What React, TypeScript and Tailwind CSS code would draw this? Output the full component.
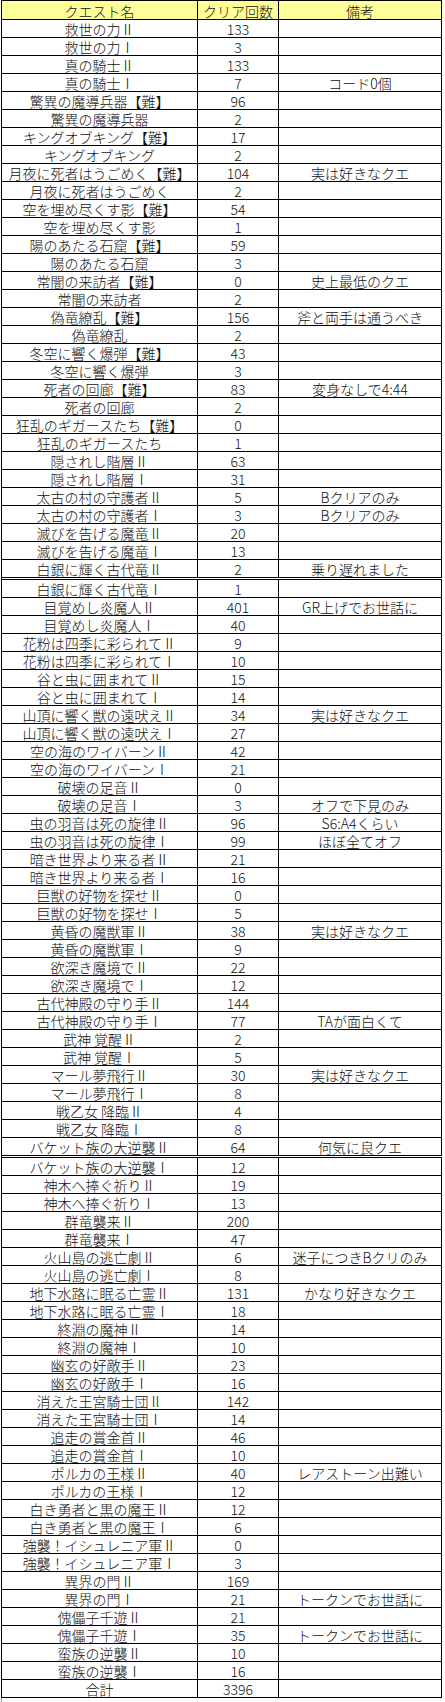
import React from "react";

type Row = [string, number, string?, boolean?];

const rows: Row[] = [
  ["救世の力Ⅱ", 133],
  ["救世の力Ⅰ", 3],
  ["真の騎士Ⅱ", 133],
  ["真の騎士Ⅰ", 7, "コード0個"],
  ["驚異の魔導兵器【難】", 96],
  ["驚異の魔導兵器", 2],
  ["キングオブキング【難】", 17],
  ["キングオブキング", 2],
  ["月夜に死者はうごめく【難】", 104, "実は好きなクエ"],
  ["月夜に死者はうごめく", 2],
  ["空を埋め尽くす影【難】", 54],
  ["空を埋め尽くす影", 1],
  ["陽のあたる石窟【難】", 59],
  ["陽のあたる石窟", 3],
  ["常闇の来訪者【難】", 0, "史上最低のクエ"],
  ["常闇の来訪者", 2],
  ["偽竜繚乱【難】", 156, "斧と両手は通うべき"],
  ["偽竜繚乱", 2],
  ["冬空に響く爆弾【難】", 43],
  ["冬空に響く爆弾", 3],
  ["死者の回廊【難】", 83, "変身なしで4:44"],
  ["死者の回廊", 2],
  ["狂乱のギガースたち【難】", 0],
  ["狂乱のギガースたち", 1],
  ["隠されし階層Ⅱ", 63],
  ["隠されし階層Ⅰ", 31],
  ["太古の村の守護者Ⅱ", 5, "Bクリアのみ"],
  ["太古の村の守護者Ⅰ", 3, "Bクリアのみ"],
  ["滅びを告げる魔竜Ⅱ", 20],
  ["滅びを告げる魔竜Ⅰ", 13],
  ["白銀に輝く古代竜Ⅱ", 2, "乗り遅れました", true],
  ["白銀に輝く古代竜Ⅰ", 1],
  ["目覚めし炎魔人Ⅱ", 401, "GR上げでお世話に"],
  ["目覚めし炎魔人Ⅰ", 40],
  ["花粉は四季に彩られてⅡ", 9],
  ["花粉は四季に彩られてⅠ", 10],
  ["谷と虫に囲まれてⅡ", 15],
  ["谷と虫に囲まれてⅠ", 14],
  ["山頂に響く獣の遠吠えⅡ", 34, "実は好きなクエ"],
  ["山頂に響く獣の遠吠えⅠ", 27],
  ["空の海のワイバーンⅡ", 42],
  ["空の海のワイバーンⅠ", 21],
  ["破壊の足音Ⅱ", 0],
  ["破壊の足音Ⅰ", 3, "オフで下見のみ"],
  ["虫の羽音は死の旋律Ⅱ", 96, "S6:A4くらい"],
  ["虫の羽音は死の旋律Ⅰ", 99, "ほぼ全てオフ"],
  ["暗き世界より来る者Ⅱ", 21],
  ["暗き世界より来る者Ⅰ", 16],
  ["巨獣の好物を探せⅡ", 0],
  ["巨獣の好物を探せⅠ", 5],
  ["黄昏の魔獣軍Ⅱ", 38, "実は好きなクエ"],
  ["黄昏の魔獣軍Ⅰ", 9],
  ["欲深き魔境でⅡ", 22],
  ["欲深き魔境でⅠ", 12],
  ["古代神殿の守り手Ⅱ", 144],
  ["古代神殿の守り手Ⅰ", 77, "TAが面白くて"],
  ["武神 覚醒Ⅱ", 2],
  ["武神 覚醒Ⅰ", 5],
  ["マール夢飛行Ⅱ", 30, "実は好きなクエ"],
  ["マール夢飛行Ⅰ", 8],
  ["戦乙女 降臨Ⅱ", 4],
  ["戦乙女 降臨Ⅰ", 8],
  ["バケット族の大逆襲Ⅱ", 64, "何気に良クエ", true],
  ["バケット族の大逆襲Ⅰ", 12],
  ["神木へ捧ぐ祈りⅡ", 19],
  ["神木へ捧ぐ祈りⅠ", 13],
  ["群竜襲来Ⅱ", 200],
  ["群竜襲来Ⅰ", 47],
  ["火山島の逃亡劇Ⅱ", 6, "迷子につきBクリのみ"],
  ["火山島の逃亡劇Ⅰ", 8],
  ["地下水路に眠る亡霊Ⅱ", 131, "かなり好きなクエ"],
  ["地下水路に眠る亡霊Ⅰ", 18],
  ["終淵の魔神Ⅱ", 14],
  ["終淵の魔神Ⅰ", 10],
  ["幽玄の好敵手Ⅱ", 23],
  ["幽玄の好敵手Ⅰ", 16],
  ["消えた王宮騎士団Ⅱ", 142],
  ["消えた王宮騎士団Ⅰ", 14],
  ["追走の賞金首Ⅱ", 46],
  ["追走の賞金首Ⅰ", 10],
  ["ポルカの王様Ⅱ", 40, "レアストーン出難い"],
  ["ポルカの王様Ⅰ", 12],
  ["白き勇者と黒の魔王Ⅱ", 12],
  ["白き勇者と黒の魔王Ⅰ", 6],
  ["強襲！イシュレニア軍Ⅱ", 0],
  ["強襲！イシュレニア軍Ⅰ", 3],
  ["異界の門Ⅱ", 169],
  ["異界の門Ⅰ", 21, "トークンでお世話に"],
  ["傀儡子千遊Ⅱ", 21],
  ["傀儡子千遊Ⅰ", 35, "トークンでお世話に"],
  ["蛮族の逆襲Ⅱ", 10],
  ["蛮族の逆襲Ⅰ", 16],
];

const cols = "grid grid-cols-[196px_81px_163px]";
const cell = "flex items-end justify-center border-r border-black leading-[15px] whitespace-nowrap";

const App = () => {
  const total = rows.reduce((s, r) => s + r[1], 0);

  return (
    <div className="min-h-screen bg-white text-[#111] text-[14px] font-light [font-family:'Noto_Sans_CJK_JP','Noto_Sans_CJK_SC',sans-serif]">
      <div className="ml-px w-[441px] border-l border-t border-black">
        <div className={`${cols} h-[19px] border-b border-black bg-[#ffff99]`}>
          <div className={cell}>クエスト名</div>
          <div className={cell}>クリア回数</div>
          <div className={cell}>備考</div>
        </div>
        {rows.map(([name, count, note, dbl], i) => (
          <div
            key={i}
            className={
              dbl
                ? "grid h-[20px] grid-cols-[196px_81px_163px] border-b-[3px] border-double border-black"
                : "grid h-[18px] grid-cols-[196px_81px_163px] border-b border-black"
            }
          >
            <div className={cell}>{name}</div>
            <div className={cell}>{count}</div>
            <div className={cell}>{note ?? ""}</div>
          </div>
        ))}
        <div className={`${cols} h-[18px] border-b border-black`}>
          <div className={cell}>合計</div>
          <div className={cell}>{total}</div>
          <div className={cell}></div>
        </div>
      </div>
      <div className="ml-px h-[8px] border-l border-gray-400" />
    </div>
  );
};

export default App;
